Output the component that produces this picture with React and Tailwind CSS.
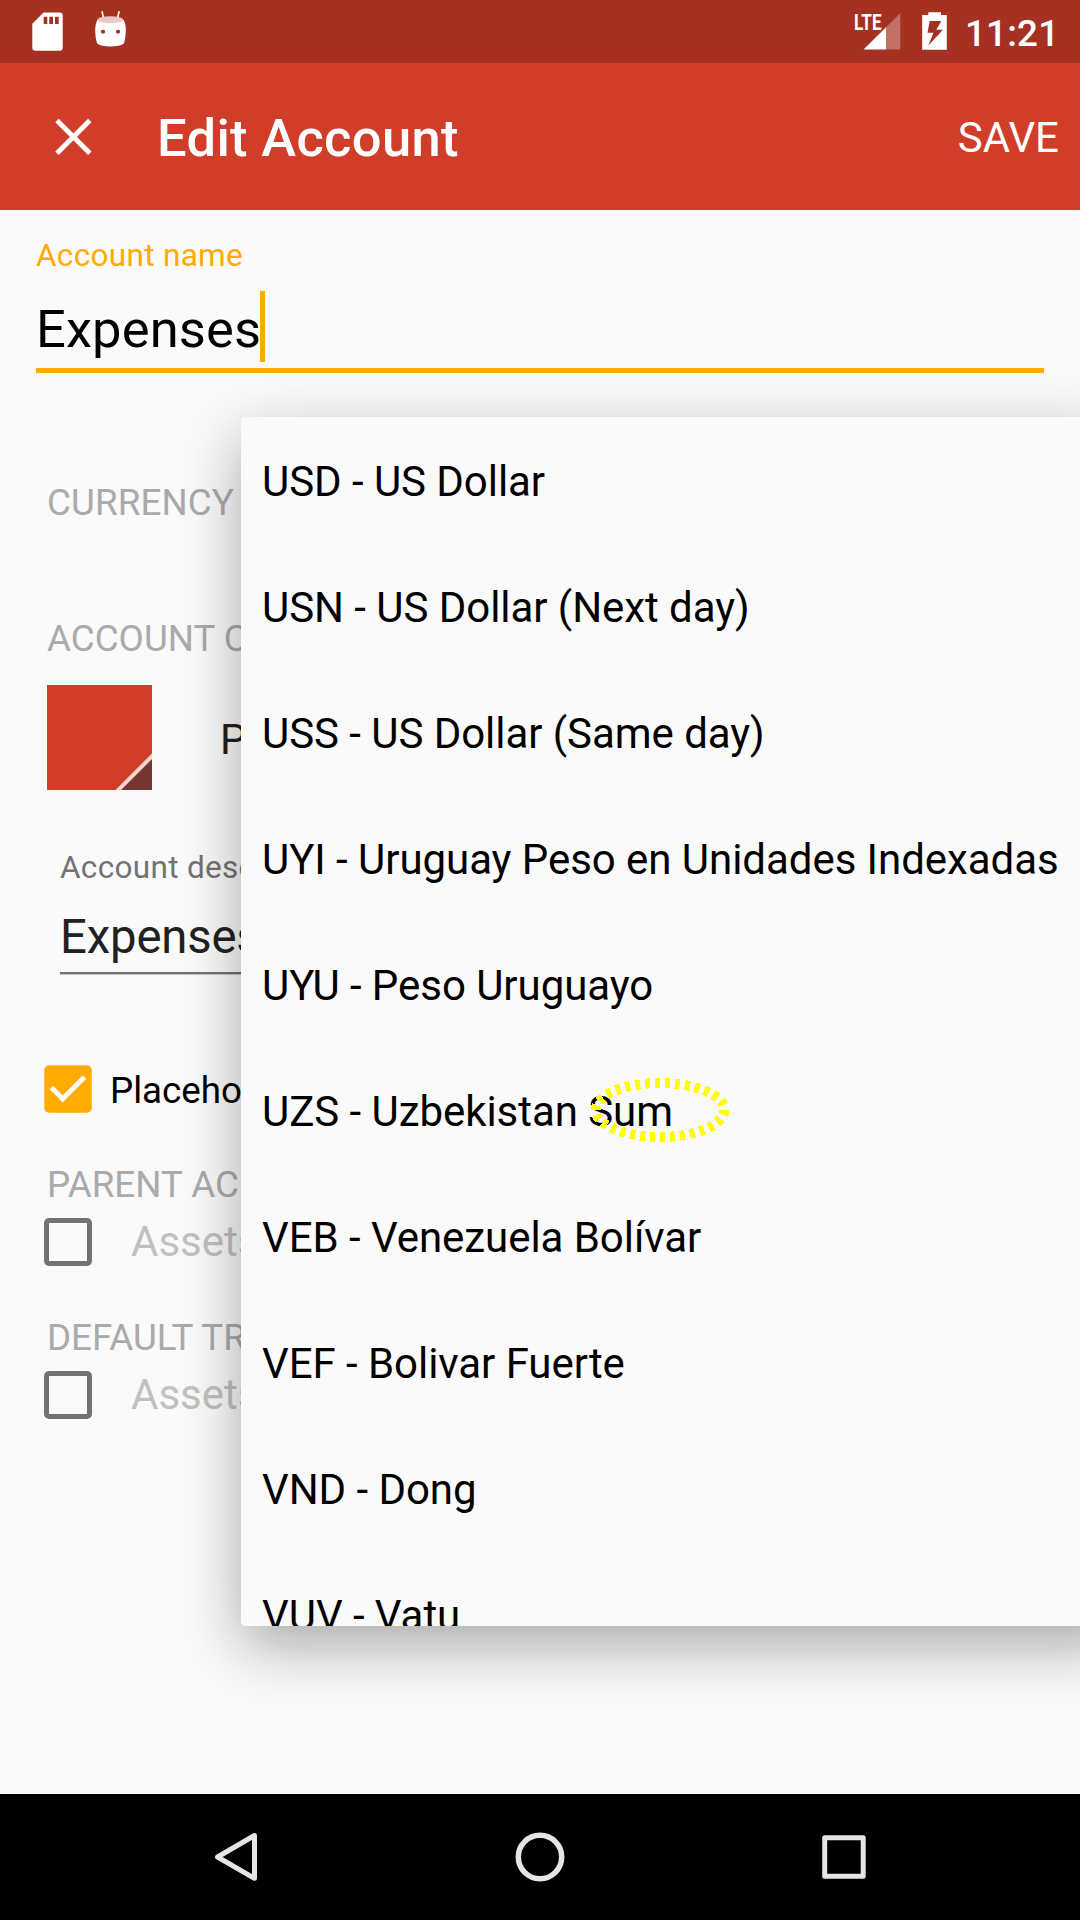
const currencies = [
  "USD - US Dollar",
  "USN - US Dollar (Next day)",
  "USS - US Dollar (Same day)",
  "UYI - Uruguay Peso en Unidades Indexadas",
  "UYU - Peso Uruguayo",
  "UZS - Uzbekistan Sum",
  "VEB - Venezuela Bolívar",
  "VEF - Bolivar Fuerte",
  "VND - Dong",
  "VUV - Vatu",
];

function StatusBar() {
  return (
    <div className="flex h-[63px] items-start bg-[#a53122] text-white">
      <svg className="ml-8 mt-3 h-10 w-8" viewBox="32 12 32 40">
        <path fill="#fff" fillRule="evenodd" d="M43.5 12.5H59.7a3 3 0 0 1 3 3V47.700a3 3 0 0 1-3 3H35.300a3 3 0 0 1-3-3V23.800ZM43.700 16.700V24h3.600V16.700ZM49.300 16.700V24h3.700V16.700ZM55 16.700V24h3.700V16.700Z" />
      </svg>
      <svg className="ml-7 h-[63px] w-10" viewBox="92 0 40 63">
        <path stroke="#fff" strokeWidth="1.600" d="M102 11.200l1.700 7.500M119.200 11.200L117.400 18.700" />
        <path fill="#fff" d="M97.300 20Q110.500 15 123.700 20Q126 24 125.800 31Q125.700 38 124 43.300C122 45.400 116 46.600 110.500 46.600S99 45.400 97 43.300Q95.300 38 95.200 31Q95.200 24 97.300 20Z" />
        <ellipse cx="110.300" cy="19.700" rx="12.900" ry="3.500" fill="#e8c9c5" />
        <rect x="101" y="29.700" width="4" height="3.700" rx="1.500" fill="#a53122" />
        <rect x="116" y="29.700" width="4" height="3.700" rx="1.500" fill="#a53122" />
      </svg>
      <div className="ml-auto flex h-full">
        <div className="relative w-[50px]">
          <span className="absolute left-[2px] top-[10px] origin-left scale-x-[0.76] text-[22.5px] font-bold leading-6">LTE</span>
          <svg className="h-[63px] w-[50px]" viewBox="852 0 50 63">
            <path fill="#c27065" d="M900.300 13V49.500H886V27.300Z" />
            <path fill="#fff" d="M886 27.300V49.500H863.500Z" />
          </svg>
        </div>
        <svg className="ml-[18px] h-[63px] w-7" viewBox="920 0 28 63">
          <path fill="#fff" fillRule="evenodd" d="M928.300 12.300H941V15H946.800V49.700H922.200V15H928.300ZM929.700 21L927.500 32.700H933.500L928.300 45.500L943 29.700H936.300L941.300 21Z" />
        </svg>
        <span className="ml-[17px] mr-[25px] mt-0.5 w-[90px] whitespace-nowrap text-[36.75px] font-medium leading-[63px] tracking-[0.2px]">11:21</span>
      </div>
    </div>
  );
}

function AppBar() {
  return (
    <header className="flex h-[147px] items-center bg-[#d03d29] text-white">
      <svg className="ml-[53px] h-10 w-10 shrink-0" viewBox="0 0 40 40" stroke="#fff" strokeWidth="4.900">
        <path d="M4 3.500L36.800 36.300M36.800 3.500L4 36.300" />
      </svg>
      <h1 className="ml-16 mt-[3px] text-[52.5px] font-medium leading-[60px] tracking-[0.32px]">Edit Account</h1>
      <span className="ml-auto mr-[21px] mt-[3px] text-[42px] leading-[50px]">SAVE</span>
    </header>
  );
}

function EmptyBox() {
  return <span className="h-12 w-12 shrink-0 rounded-[5px] border-[5px] border-[#737373]" />;
}

function Section({ children, className }) {
  return <div className={`ml-[47px] text-[36.75px] leading-[44px] text-[#aaaaaa] ${className}`}>{children}</div>;
}

function AccountForm() {
  return (
    <div className="flex flex-col whitespace-nowrap">
      <label className="ml-9 mt-7 text-[31.5px] leading-9 tracking-[0.32px] text-[#ffab00]">Account name</label>
      <div className="mx-9 mt-[17px] flex h-[82px] border-b-[5px] border-[#ffab00]">
        <span className="w-56 pt-[3px] text-[52.5px] leading-[71px] tracking-[0.12px] text-black">Expenses</span>
        <span className="h-[71px] w-[5px] bg-[#ffab00]" />
      </div>
      <Section className="mt-[108px] tracking-[0.1px]">CURRENCY</Section>
      <Section className="mt-[92px]">ACCOUNT COLOR &amp; TYPE</Section>
      <div className="ml-[47px] mt-6 flex h-[105px] items-center">
        <svg className="h-[105px] w-[105px]" viewBox="0 0 105 105">
          <rect width="105" height="105" fill="#d03d29" />
          <path d="M105 68.500V105H68.500Z" fill="#f9d5d0" />
          <path d="M105 74V105H74Z" fill="#733730" />
        </svg>
        <span className="ml-[68px] mt-[5px] text-[42px] leading-[50px] text-[#212121]">Placeholder</span>
      </div>
      <label className="ml-[60px] mt-[60px] text-[31.5px] leading-9 tracking-[0.32px] text-[#737373]">Account description</label>
      <div className="mx-[60px] mt-[21px] h-[67px] border-b-2 border-[#737373] text-[47.25px] leading-[60px] tracking-[-0.15px] text-[#212121] shadow-[0_1px_0_#c4c4c4]">Expenses</div>
      <div className="ml-11 mt-[91px] flex h-12 items-center">
        <svg className="h-12 w-12" viewBox="0 0 48 48">
          <rect x="0.300" y="0.300" width="47.500" height="47.500" rx="5" fill="#ffab00" />
          <path d="M7.500 22.500L18.700 34L40.500 12" fill="none" stroke="#fafafa" strokeWidth="5" />
        </svg>
        <span className="ml-[18px] mt-1 text-[36.75px] leading-[44px] text-black">Placeholder account</span>
      </div>
      <Section className="mt-[50px]">PARENT ACCOUNT</Section>
      <div className="ml-11 mt-[11px] flex h-12 items-center">
        <EmptyBox />
        <span className="ml-[39px] text-[42px] leading-[48px] text-[#c0c0c0]">Assets</span>
      </div>
      <Section className="mt-[50px]">DEFAULT TRANSFER ACCOUNT</Section>
      <div className="ml-11 mt-[11px] flex h-12 items-center">
        <EmptyBox />
        <span className="ml-[39px] text-[42px] leading-[48px] text-[#c0c0c0]">Assets</span>
      </div>
    </div>
  );
}

function CurrencyMenu() {
  return (
    <div className="absolute left-[241px] top-[207px] h-[1209px] w-[839px]">
      {/* The shadow runs on past the right screen edge */}
      <div className="absolute inset-y-0 left-0 -right-10 rounded-[5px] shadow-[0_20px_60px_rgba(0,0,0,0.33)]" />
      <ul className="relative h-full overflow-hidden rounded-[5px] bg-[#fafafa] pt-0.5">
        {currencies.map((name) => (
          <li key={name} className="h-[126px] whitespace-nowrap pl-[21px] text-[42px] leading-[126px] tracking-[-0.05px] text-black">
            {name}
          </li>
        ))}
      </ul>
      <svg className="absolute left-[345px] top-[659px] h-[70px] w-[148px]" viewBox="586 1076 148 70" shapeRendering="crispEdges">
        <ellipse cx="660" cy="1110" rx="64.500" ry="27" fill="none" stroke="#ffff00" strokeWidth="10" strokeDasharray="5 5" pathLength="300" />
      </svg>
    </div>
  );
}

function NavigationBar() {
  return (
    <nav className="flex h-[126px] items-center bg-black">
      <svg className="ml-[212px] h-14 w-12" viewBox="0 0 48 56" fill="none" stroke="#e5e5e5" strokeWidth="5" strokeLinejoin="round">
        <path d="M42.500 6.500V49.300L5.500 28Z" />
      </svg>
      <svg className="ml-[252px] h-14 w-14" viewBox="0 0 56 56" fill="none" stroke="#e5e5e5" strokeWidth="5.500">
        <circle cx="28" cy="28" r="21.700" />
      </svg>
      <svg className="ml-[248px] h-14 w-14" viewBox="0 0 56 56" fill="none" stroke="#e5e5e5" strokeWidth="5" strokeLinejoin="round">
        <rect x="8.700" y="8.700" width="38.500" height="38.500" />
      </svg>
    </nav>
  );
}

export default function App() {
  return (
    <div className="flex h-[1920px] w-[1080px] flex-col overflow-hidden bg-[#fafafa] font-['Roboto',sans-serif]">
      <StatusBar />
      <AppBar />
      <main className="relative h-[1584px] overflow-hidden">
        <AccountForm />
        <CurrencyMenu />
      </main>
      <NavigationBar />
    </div>
  );
}
